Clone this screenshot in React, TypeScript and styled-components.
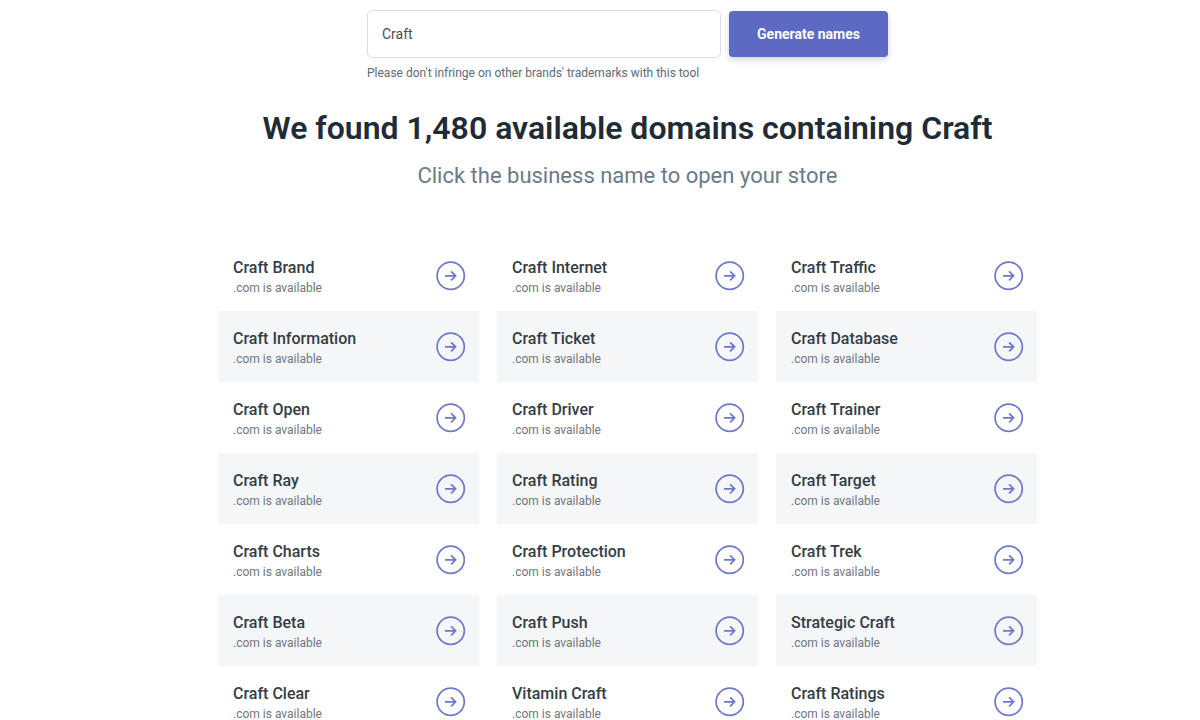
import React from "react";
import styled, { createGlobalStyle } from "styled-components";

const GlobalStyle = createGlobalStyle`
  *, *::before, *::after { box-sizing: border-box; }
  html { scrollbar-width: none; }
  body {
    margin: 0;
    background: #fff;
    color: #212b36;
    font-family: Roboto, "Liberation Sans", sans-serif;
  }
`;

const Page = styled.main`
  display: flex;
  flex-direction: column;
  align-items: center;
  padding: 10px 108px 0 163px;
`;

const SearchForm = styled.form`
  width: 100%;
  max-width: 521px;
`;

const Controls = styled.div`
  display: flex;
  align-items: center;
  gap: 8px;
`;

const KeywordInput = styled.input`
  flex: 1;
  min-width: 0;
  height: 48px;
  padding: 0 14px;
  border: 1px solid #d9dde2;
  border-radius: 5px;
  background: #fff;
  color: #454f5b;
  font-family: inherit;
  font-size: 14px;
  outline: none;
`;

const SubmitButton = styled.button`
  width: 159px;
  height: 46px;
  border: 0;
  border-radius: 4px;
  background: #5c6ac4;
  box-shadow: 0 3px 6px rgba(50, 60, 110, 0.2);
  color: #fff;
  font-family: inherit;
  font-size: 14px;
  font-weight: 700;
  cursor: pointer;
`;

const Notice = styled.p`
  margin: 7px 0 0;
  color: #5b6b79;
  font-size: 12px;
  line-height: 16px;
`;

const Heading = styled.h1`
  margin: 27px 0 0;
  font-size: 32px;
  font-weight: 600;
  line-height: 40px;
  text-align: center;
`;

const Subheading = styled.p`
  margin: 14px 0 0;
  color: #6b7a87;
  font-size: 22px;
  line-height: 28px;
  text-align: center;
`;

const Results = styled.ul`
  display: grid;
  grid-template-columns: repeat(3, 1fr);
  grid-auto-rows: 71px;
  column-gap: 18px;
  width: 100%;
  max-width: 819px;
  margin: 50px 0 0;
  padding: 0;
  list-style: none;
`;

const ResultItem = styled.li<{ $shaded: boolean }>`
  background: ${({ $shaded }) => ($shaded ? "#f4f6f8" : "#fff")};
`;

const ResultLink = styled.a`
  display: flex;
  align-items: center;
  justify-content: space-between;
  height: 100%;
  padding: 0 13px 0 15px;
  color: #343d46;
  text-decoration: none;
`;

const Label = styled.span`
  padding-top: 4px;
`;

const Name = styled.span`
  display: block;
  font-size: 16px;
  font-weight: 500;
  line-height: 20px;
`;

const Availability = styled.span`
  display: block;
  color: #70767d;
  font-size: 12px;
  line-height: 20px;
`;

const ArrowSvg = styled.svg`
  flex: none;
  width: 30px;
  height: 30px;
  fill: none;
  stroke: #6d78ca;
  stroke-width: 1.7;
`;

const ArrowIcon = () => (
  <ArrowSvg viewBox="0 0 30 30" aria-hidden="true">
    <circle cx="14.7" cy="14.8" r="13.6" />
    <path d="M9 14.8H19.6M15.1 10.3L19.6 14.8L15.1 19.3" />
  </ArrowSvg>
);

const names = [
  "Craft Brand", "Craft Internet", "Craft Traffic",
  "Craft Information", "Craft Ticket", "Craft Database",
  "Craft Open", "Craft Driver", "Craft Trainer",
  "Craft Ray", "Craft Rating", "Craft Target",
  "Craft Charts", "Craft Protection", "Craft Trek",
  "Craft Beta", "Craft Push", "Strategic Craft",
  "Craft Clear", "Vitamin Craft", "Craft Ratings",
];

export default function App() {
  return (
    <>
      <GlobalStyle />
      <Page>
        <SearchForm onSubmit={(event) => event.preventDefault()}>
          <Controls>
            <KeywordInput type="text" aria-label="Business name keyword" defaultValue="Craft" />
            <SubmitButton type="submit">Generate names</SubmitButton>
          </Controls>
          <Notice>Please don't infringe on other brands' trademarks with this tool</Notice>
        </SearchForm>
        <Heading>We found 1,480 available domains containing Craft</Heading>
        <Subheading>Click the business name to open your store</Subheading>
        <Results>
          {names.map((name, index) => (
            <ResultItem key={name} $shaded={Math.floor(index / 3) % 2 === 1}>
              <ResultLink href="#">
                <Label>
                  <Name>{name}</Name>
                  <Availability>.com is available</Availability>
                </Label>
                <ArrowIcon />
              </ResultLink>
            </ResultItem>
          ))}
        </Results>
      </Page>
    </>
  );
}
